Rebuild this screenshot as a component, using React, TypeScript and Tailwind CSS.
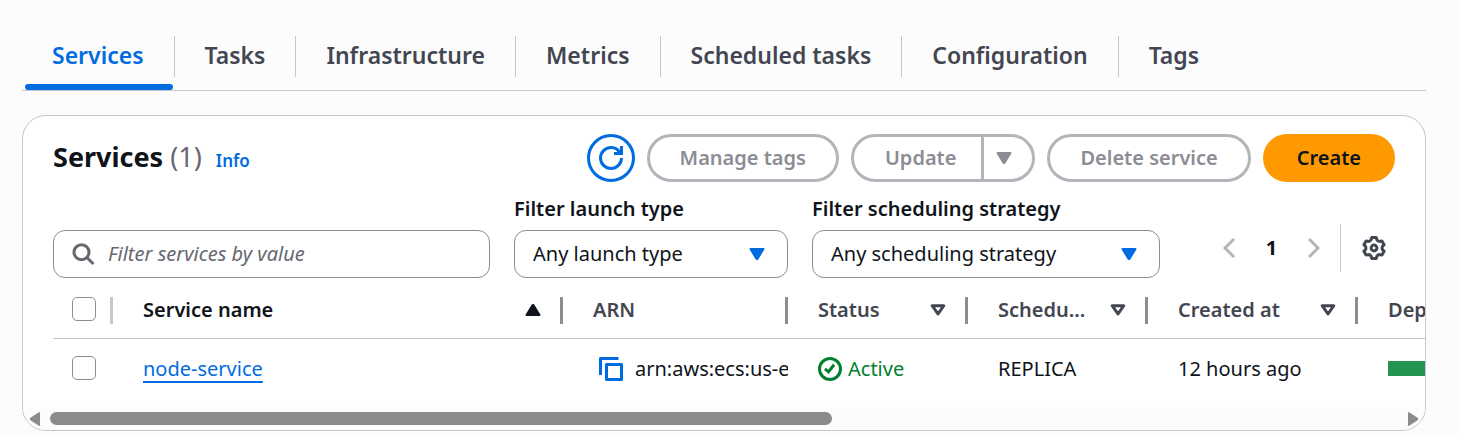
import React from "react";
import type { ReactNode } from "react";

const tabs = ["Services", "Tasks", "Infrastructure", "Metrics", "Scheduled tasks", "Configuration", "Tags"];

function RefreshIcon() {
  return (
    <svg viewBox="0 0 24 24" className="size-6" fill="none" stroke="currentColor" strokeWidth="3" aria-hidden="true">
      <path d="M22.5 12A10.5 10.5 0 1 1 12 1.5c4.3 0 7.6 2.3 9.3 6" />
      <path d="M22.5 0v7.5H15" />
    </svg>
  );
}

function SearchIcon() {
  return (
    <svg viewBox="0 0 24 24" className="size-6 shrink-0" fill="none" stroke="currentColor" strokeWidth="3" aria-hidden="true">
      <circle cx="9.5" cy="10.2" r="7.5" />
      <path d="M14.8 15.5l6.700 6.500" />
    </svg>
  );
}

function CaretDown() {
  return (
    <svg viewBox="0 0 16 12" className="h-3 w-4 shrink-0" fill="currentColor" stroke="currentColor" strokeWidth="2" strokeLinejoin="round" aria-hidden="true">
      <path d="M1.5 1h13L8.4 11h-.8z" />
    </svg>
  );
}

function CaretUp() {
  return (
    <svg viewBox="0 0 16 12" className="h-3 w-4 shrink-0" fill="currentColor" stroke="currentColor" strokeWidth="2" strokeLinejoin="round" aria-hidden="true">
      <path d="M1.5 11h13L8.4 1h-.8z" />
    </svg>
  );
}

function CaretOutline() {
  return (
    <svg viewBox="0 0 16 12" className="h-3 w-4 shrink-0" fill="none" stroke="currentColor" strokeWidth="3" strokeLinejoin="round" aria-hidden="true">
      <path d="M2.2 1.7h11.600L8 10z" />
    </svg>
  );
}

function Chevron({ left }: { left?: boolean }) {
  return (
    <svg viewBox="0 0 12 20" className="h-5 w-3" fill="none" stroke="currentColor" strokeWidth="3" aria-hidden="true">
      <path d={left ? "M11 1L2 10l9 9" : "M1 1l9 9-9 9"} />
    </svg>
  );
}

function GearIcon() {
  return (
    <svg viewBox="0 0 24 24" className="size-6" fill="none" stroke="currentColor" strokeWidth="3" strokeLinejoin="round" aria-hidden="true">
      <path d="M9.8 1.5h4.4L14.9 3.8Q15.8 5.4 17.6 5.4L19.9 4.9 22.1 8.7 20.5 10.4Q19.6 12 20.5 13.6L22.1 15.3 19.9 19.1 17.6 18.6Q15.8 18.6 14.9 20.2L14.2 22.5H9.8L9.1 20.2Q8.2 18.6 6.4 18.6L4.1 19.1 1.900 15.3 3.5 13.6Q4.4 12 3.5 10.4L1.900 8.7 4.1 4.9 6.4 5.4Q8.2 5.4 9.1 3.8z" />
      <circle cx="12" cy="12" r="2.9" />
    </svg>
  );
}

function CopyIcon() {
  return (
    <svg viewBox="0 0 24 24" className="size-6" fill="none" stroke="currentColor" strokeWidth="3" strokeLinejoin="round" aria-hidden="true">
      <path d="M19.5 1.5h-18v16.5" />
      <rect x="7.5" y="7.5" width="15" height="15" />
    </svg>
  );
}

function StatusIcon() {
  return (
    <svg viewBox="0 0 24 24" className="size-6 shrink-0" fill="none" stroke="currentColor" strokeWidth="3" aria-hidden="true">
      <circle cx="12" cy="12" r="10.5" />
      <path d="M7 11.800l3.500 3 5.600-7" />
    </svg>
  );
}

function GrayButton({ children }: { children: ReactNode }) {
  return (
    <button type="button" className="h-12 rounded-full border-3 border-[#b4b4bb] px-[30px] font-semibold text-[#8c8c94]">
      {children}
    </button>
  );
}

function Filter({ id, label, value, width }: { id: string; label: string; value: string; width: string }) {
  return (
    <div className={width}>
      <label htmlFor={id} className="block h-8 font-semibold leading-[22px]">{label}</label>
      <div className="grid items-center text-[#006ce0]">
        <select id={id} className="col-start-1 row-start-1 h-12 w-full appearance-none rounded-xl border border-[#8c8c94] bg-white px-[18px] text-[#0f141a]">
          <option>{value}</option>
        </select>
        <span className="pointer-events-none col-start-1 row-start-1 mr-[23px] justify-self-end">
          <CaretDown />
        </span>
      </div>
    </div>
  );
}

function Header({ children, icon, width, active, last }: { children: ReactNode; icon?: ReactNode; width: string; active?: boolean; last?: boolean }) {
  return (
    <th scope="col" className={`${width} border-b border-[#c6c6cd] p-0 pt-1 text-left font-semibold ${active ? "text-[#0f141a]" : "text-[#424650]"}`}>
      <div className={`flex h-[27px] items-center gap-3 pl-[30px] ${last ? "" : "border-r-3 border-[#8c8c94] pr-[19px]"}`}>
        <span className="min-w-0 flex-1 truncate">{children}</span>
        {icon}
      </div>
    </th>
  );
}

function Check({ label }: { label: string }) {
  return <input type="checkbox" aria-label={label} className="block size-6 appearance-none rounded-[5px] border border-[#8c8c94] bg-white" />;
}

export default function App() {
  return (
    <div className="min-h-screen bg-[#fcfcfd] pr-[33px] pl-[22px] font-['Noto_Sans',sans-serif] text-[20px] leading-[30px] text-[#0f141a]">
      <nav aria-label="Cluster sections" className="flex h-[91px] items-end border-b border-[#c6c6cd] text-[23px] font-semibold text-[#424650]">
        {tabs.map((tab, i) => (
          <div key={tab} className="flex flex-col">
            <a href="#" className={`flex h-[41px] items-center px-[30px] pb-[3px] ${i < tabs.length - 1 ? "border-r border-[#c6c6cd]" : ""} ${i === 0 ? "text-[#006ce0]" : ""}`}>
              {tab}
            </a>
            <div className={`mr-0.5 ml-[3px] mt-[7px] h-1.5 rounded-full ${i === 0 ? "bg-[#006ce0]" : ""}`} />
          </div>
        ))}
      </nav>

      <section className="mt-6 overflow-hidden rounded-3xl border border-[#c6c6cd] bg-white">
        <header className="flex items-center gap-3 px-[30px] pt-[18px]">
          <div className="mr-auto flex items-baseline pt-0.5">
            <h1 className="text-[27px] font-bold">
              Services <span className="font-normal text-[#656871]">(1)</span>
            </h1>
            <a href="#" className="ml-3.5 text-[17px] font-semibold text-[#006ce0]">Info</a>
          </div>
          <button type="button" aria-label="Refresh" className="flex size-12 items-center justify-center rounded-full border-3 border-[#006ce0] text-[#006ce0]">
            <RefreshIcon />
          </button>
          <GrayButton>Manage tags</GrayButton>
          <div className="flex h-12 rounded-full border-3 border-[#b4b4bb] font-semibold text-[#8c8c94]">
            <button type="button" className="border-r-3 border-[#b4b4bb] pr-[25px] pl-[31px]">Update</button>
            <button type="button" aria-label="More update actions" className="flex w-12 items-center pl-3">
              <CaretDown />
            </button>
          </div>
          <GrayButton>Delete service</GrayButton>
          <button type="button" className="h-12 rounded-full bg-[#ff9900] px-[34px] font-semibold">Create</button>
        </header>

        <div className="flex items-end gap-6 px-[30px] pt-4">
          <label className="flex h-12 flex-1 items-center gap-3 rounded-xl border border-[#8c8c94] px-[18px] text-[#656871]">
            <SearchIcon />
            <input type="text" aria-label="Filter services" placeholder="Filter services by value" className="w-full outline-none placeholder:text-[#656871] placeholder:italic" />
          </label>
          <Filter id="launch" label="Filter launch type" value="Any launch type" width="w-[274px]" />
          <Filter id="strategy" label="Filter scheduling strategy" value="Any scheduling strategy" width="w-[348px]" />
          <div className="mb-1.5 ml-[39px] flex h-12 items-center pr-[9px]">
            <button type="button" aria-label="Previous page" className="text-[#b4b4bb]"><Chevron left /></button>
            <button type="button" className="w-[73px] font-bold">1</button>
            <button type="button" aria-label="Next page" className="text-[#b4b4bb]"><Chevron /></button>
            <div className="mr-[21px] ml-5 h-12 w-px bg-[#c6c6cd]" />
            <button type="button" aria-label="Preferences" className="text-[#424650]"><GearIcon /></button>
          </div>
        </div>

        <div className="overflow-hidden pl-[30px]">
          <table className="w-[1705px] table-fixed border-separate border-spacing-0">
            <thead>
              <tr className="h-[61px]">
                <th scope="col" className="w-[60px] border-b border-[#c6c6cd] p-0 pt-1">
                  <div className="flex h-[27px] items-start border-r-3 border-[#c6c6cd] pl-[19px]">
                    <Check label="Select all services" />
                  </div>
                </th>
                <Header width="w-[450px]" active icon={<CaretUp />}>Service name</Header>
                <Header width="w-[225px]">ARN</Header>
                <Header width="w-[180px]" icon={<CaretOutline />}>Status</Header>
                <Header width="w-[180px]" icon={<CaretOutline />}>Schedu...</Header>
                <Header width="w-[210px]" icon={<CaretOutline />}>Created at</Header>
                <Header width="w-[400px]" last>Deployments</Header>
              </tr>
            </thead>
            <tbody>
              <tr className="h-[68px]">
                <td className="p-0 pb-2.5 pl-[19px]"><Check label="Select node-service" /></td>
                <td className="p-0 pb-2 pl-[30px]">
                  <a href="#" className="text-[#006ce0] underline decoration-2 underline-offset-[5px]">node-service</a>
                </td>
                <td className="p-0 pb-2 pl-9">
                  <div className="flex items-center gap-3 overflow-hidden whitespace-nowrap">
                    <button type="button" aria-label="Copy ARN" className="shrink-0 text-[#006ce0]"><CopyIcon /></button>
                    <span>arn:aws:ecs:us-e</span>
                  </div>
                </td>
                <td className="p-0 pb-2 pl-[30px]">
                  <div className="flex items-center gap-1.5 text-[#00802f]"><StatusIcon />Active</div>
                </td>
                <td className="p-0 pb-2 pl-[30px]">REPLICA</td>
                <td className="p-0 pb-2 pl-[30px]">12 hours ago</td>
                <td className="p-0 pb-2.5 pl-[30px]"><div className="h-[15px] bg-[#259451]" /></td>
              </tr>
            </tbody>
          </table>
        </div>

        <div className="flex h-[23px] items-center bg-[#fcfcfd] px-1.5 text-[#8b8b8b]" aria-hidden="true">
          <svg viewBox="0 0 12 14" className="h-3.5 w-3" fill="currentColor"><path d="M11 0v14L9.5 13.5 1 8V6L9.5.5z" /></svg>
          <div className="mx-[9px] flex-1">
            <div className="h-[13px] w-[58%] rounded-full bg-[#8b8b8b]" />
          </div>
          <svg viewBox="0 0 12 14" className="h-3.5 w-3" fill="currentColor"><path d="M1 0v14l1.5-.5L11 8V6L2.5.5z" /></svg>
        </div>
      </section>
    </div>
  );
}
